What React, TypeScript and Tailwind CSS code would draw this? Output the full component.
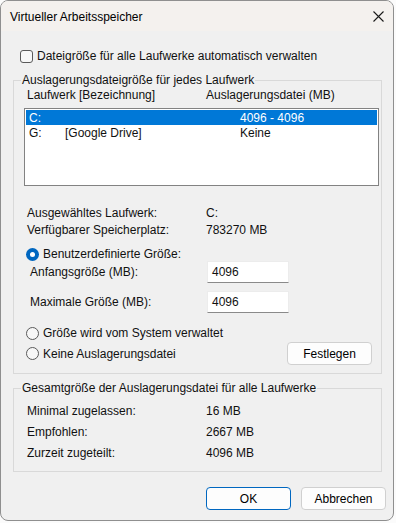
import React from "react";

const font = { fontFamily: '"Liberation Sans", Arial, sans-serif' };

function Radio({ checked }: { checked?: boolean }) {
  return checked ? (
    <span className="w-[13px] h-[13px] rounded-full bg-[#0067c0] flex items-center justify-center shrink-0">
      <span className="w-[5px] h-[5px] rounded-full bg-white" />
    </span>
  ) : (
    <span className="w-[13px] h-[13px] rounded-full border border-[#5a5a5a] bg-[#f7f7f7] shrink-0" />
  );
}

function Btn({ children, primary, className = "" }: { children: React.ReactNode; primary?: boolean; className?: string }) {
  return (
    <div
      className={
        "h-[23px] w-[85px] rounded-[4px] bg-[#fdfdfd] flex items-center justify-center text-[12px] text-black " +
        (primary ? "border border-[#0067c0] " : "border border-[#d0d0d0] ") +
        className
      }
    >
      {children}
    </div>
  );
}

export default function App() {
  return (
    <div className="w-[396px] h-[523px] bg-[#fbfbfb]" style={font}>
      <div className="w-[394px] h-[521px] rounded-[8px] border border-[#8f8f8f] overflow-hidden bg-[#f0f0f0] flex flex-col text-[12px] text-[#111] leading-[16px]">
        {/* title bar */}
        <div className="h-[30px] bg-[#f4f1ee] flex items-center justify-between pl-[9px] pr-[9px] shrink-0">
          <span className="text-black text-[12px] mt-[1px]">Virtueller Arbeitsspeicher</span>
          <svg width="11" height="11" viewBox="0 0 11 11" className="mt-[0px] mr-[0px]">
            <path d="M0.5 0.5 L10.5 10.5 M10.5 0.5 L0.5 10.5" stroke="#1a1a1a" strokeWidth="1.1" />
          </svg>
        </div>
        <div className="flex flex-col pl-[12px]">
          {/* checkbox */}
          <div className="flex items-center h-[16px] mt-[17px] ml-[7px] gap-[4px]">
            <span className="w-[13px] h-[13px] rounded-[3px] border border-[#5a5a5a] bg-[#f7f7f7]" />
            <span>Dateigröße für alle Laufwerke automatisch verwalten</span>
          </div>

          {/* group 1 */}
          <fieldset className="mt-[8px] w-[369px] border border-[#d9d9d9] p-0 m-0 pb-[8px]">
            <legend className="ml-[7px] px-[1px] leading-[16px]">Auslagerungsdateigröße für jedes Laufwerk</legend>
            <div className="pl-[10px] flex flex-col">
              <div className="flex h-[16px] -mt-[1px]">
                <span className="ml-[3px] w-[179px]">Laufwerk [Bezeichnung]</span>
                <span>Auslagerungsdatei (MB)</span>
              </div>
              <div className="mt-[5px] w-[355px] h-[78px] border border-[#828282] bg-white p-[1px]">
                <div className="h-[15px] bg-[#0078d7] text-white flex items-center">
                  <span className="pl-[3px] w-[214px]">C:</span>
                  <span>4096 - 4096</span>
                </div>
                <div className="h-[15px] flex items-center">
                  <span className="pl-[3px] w-[39px]">G:</span>
                  <span className="w-[175px]">[Google Drive]</span>
                  <span>Keine</span>
                </div>
              </div>
              <div className="flex h-[17px] items-center mt-[18px]">
                <span className="ml-[3px] w-[179px]">Ausgewähltes Laufwerk:</span>
                <span>C:</span>
              </div>
              <div className="flex h-[17px] items-center">
                <span className="ml-[3px] w-[179px]">Verfügbarer Speicherplatz:</span>
                <span>783270 MB</span>
              </div>
              <div className="flex h-[14px] items-center mt-[9px] ml-[2px] gap-[4px]">
                <Radio checked />
                <span>Benutzerdefinierte Größe:</span>
              </div>
              <div className="flex h-[22px] items-center">
                <span className="ml-[6px] w-[177px]">Anfangsgröße (MB):</span>
                <div className="w-[82px] h-[22px] bg-white border border-[#ececec] border-b-[#8a8a8a] flex items-center pl-[4px]">4096</div>
              </div>
              <div className="flex h-[22px] items-center mt-[8px]">
                <span className="ml-[6px] w-[177px]">Maximale Größe (MB):</span>
                <div className="w-[82px] h-[22px] bg-white border border-[#ececec] border-b-[#8a8a8a] flex items-center pl-[4px]">4096</div>
              </div>
              <div className="flex h-[16px] items-center mt-[12px] ml-[2px] gap-[4px]">
                <Radio />
                <span>Größe wird vom System verwaltet</span>
              </div>
              <div className="flex h-[23px] items-center mt-[1px] ml-[2px]">
                <Radio />
                <span className="ml-[4px] w-[244px]">Keine Auslagerungsdatei</span>
                <Btn>Festlegen</Btn>
              </div>
            </div>
          </fieldset>

          {/* group 2 */}
          <fieldset className="mt-[6px] w-[369px] border border-[#d9d9d9] p-0 m-0 pb-[8px]">
            <legend className="ml-[7px] px-[1px] leading-[16px]">Gesamtgröße der Auslagerungsdatei für alle Laufwerke</legend>
            <div className="pl-[13px] flex flex-col mt-[4px]">
              <div className="flex h-[21px] items-center">
                <span className="w-[179px]">Minimal zugelassen:</span>
                <span>16 MB</span>
              </div>
              <div className="flex h-[21px] items-center">
                <span className="w-[179px]">Empfohlen:</span>
                <span>2667 MB</span>
              </div>
              <div className="flex h-[21px] items-center">
                <span className="w-[179px]">Zurzeit zugeteilt:</span>
                <span>4096 MB</span>
              </div>
            </div>
          </fieldset>

          <div className="flex justify-end gap-[10px] mt-[15px] pr-[7px]">
            <Btn primary>OK</Btn>
            <Btn>Abbrechen</Btn>
          </div>
        </div>
      </div>
    </div>
  );
}
